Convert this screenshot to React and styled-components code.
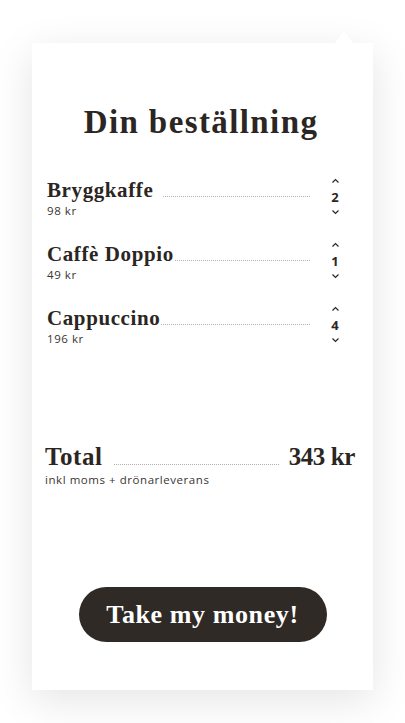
import styled, { createGlobalStyle } from 'styled-components';

const GlobalStyle = createGlobalStyle`
    html, body {
        margin: 0;
        padding: 0;
        background: #ffffff;
    }
    body {
        width: 405px;
        height: 723px;
        overflow: hidden;
        color: #2b2623;
    }
`

const Page = styled.div`
    padding: 43px 0 0 32px;
`

const Card = styled.section`
    position: relative;
    box-sizing: border-box;
    width: 341px;
    height: 647px;
    background: #fff;
    box-shadow: 0 10px 40px rgba(0, 0, 0, 0.11);
    display: flex;
    flex-direction: column;
    padding: 0 18px 0 15px;

    &:before {
        position: absolute;
        content: '';
        top: -12px;
        right: 20px;
        border-left: 9.5px solid transparent;
        border-right: 9.5px solid transparent;
        border-bottom: 12px solid #fff;
    }
`

const Title = styled.h1`
    margin: 59px 0 0;
    text-align: center;
    font-family: "Liberation Serif", serif;
    font-weight: 700;
    font-size: 33px;
    line-height: 40px;
    letter-spacing: 1.4px;
`

const Items = styled.ul`
    list-style: none;
    margin: 36px 0 0;
    padding: 0 10px 0 0;
    display: flex;
    flex-direction: column;
    gap: 24px;
`

const Item = styled.li`
    display: flex;
    align-items: flex-start;
`

const ItemInfo = styled.div`
    flex: 1;
    display: flex;
    flex-direction: column;
`

const Line = styled.div`
    display: flex;
    align-items: baseline;
`

const Name = styled.span`
    font-family: "Liberation Serif", serif;
    font-weight: 700;
    font-size: ${props => props.big ? '25px' : '21px'};
    line-height: ${props => props.big ? '28px' : '24px'};
    letter-spacing: ${props => props.spacing ?? 0.6}px;
`

const Leader = styled.span`
    flex: 1;
    border-bottom: 1px dotted #b5b0ac;
    margin: 0 ${props => props.gap || 0}px 0 ${props => props.lead || 4}px;
`

const Small = styled.span`
    font-family: "Open Sans", sans-serif;
    font-size: 11.5px;
    line-height: 14px;
    letter-spacing: 0.55px;
    margin-top: 2px;
    color: #3a3532;
`

const Qty = styled.div`
    width: 20px;
    height: 37px;
    display: flex;
    flex-direction: column;
    align-items: center;
    justify-content: space-between;
`

const Count = styled.span`
    font-family: "Open Sans", sans-serif;
    font-weight: 700;
    font-size: 13px;
    line-height: 14px;
`

const Chevron = styled.svg`
    display: block;
    width: 9px;
    height: 6px;
`

const Total = styled.div`
    margin-top: 97px;
    margin-left: -2px;
    display: flex;
    flex-direction: column;
`

const Button = styled.button`
    align-self: center;
    margin: 100px 0 0 3px;
    width: 248px;
    height: 55px;
    border: 0;
    border-radius: 28px;
    background: #2f2a26;
    color: #fff;
    font-family: "Liberation Serif", serif;
    font-weight: 700;
    font-size: 26px;
    letter-spacing: 0.6px;
    cursor: pointer;
`

const orders = [
    { name: 'Bryggkaffe', price: 98, qty: 2, lead: 10 },
    { name: 'Caffè Doppio', price: 49, qty: 1, lead: 1 },
    { name: 'Cappuccino', price: 196, qty: 4, lead: 1 },
]

function Up () {
    return (
        <Chevron viewBox="0 0 9 6">
            <polyline points="1.5,4.5 4.5,1.5 7.5,4.5" fill="none" stroke="#2b2623" strokeWidth="1.2" />
        </Chevron>
    )
}

function Down () {
    return (
        <Chevron viewBox="0 0 9 6">
            <polyline points="1.5,1.5 4.5,4.5 7.5,1.5" fill="none" stroke="#2b2623" strokeWidth="1.2" />
        </Chevron>
    )
}

export default function App () {
    const total = orders.reduce((sum, o) => sum + o.price, 0)

    return (
        <>
            <GlobalStyle />
            <Page>
                <Card>
                    <Title>Din beställning</Title>
                    <Items>
                        {orders.map(o => (
                            <Item key={o.name}>
                                <ItemInfo>
                                    <Line>
                                        <Name>{o.name}</Name>
                                        <Leader lead={o.lead} gap={15} />
                                    </Line>
                                    <Small>{o.price} kr</Small>
                                </ItemInfo>
                                <Qty>
                                    <Up />
                                    <Count>{o.qty}</Count>
                                    <Down />
                                </Qty>
                            </Item>
                        ))}
                    </Items>
                    <Total>
                        <Line>
                            <Name big spacing={0.6}>Total</Name>
                            <Leader lead={11} gap={10} />
                            <Name big spacing={-0.4}>{total} kr</Name>
                        </Line>
                        <Small>inkl moms + drönarleverans</Small>
                    </Total>
                    <Button>Take my money!</Button>
                </Card>
            </Page>
        </>
    )
}
